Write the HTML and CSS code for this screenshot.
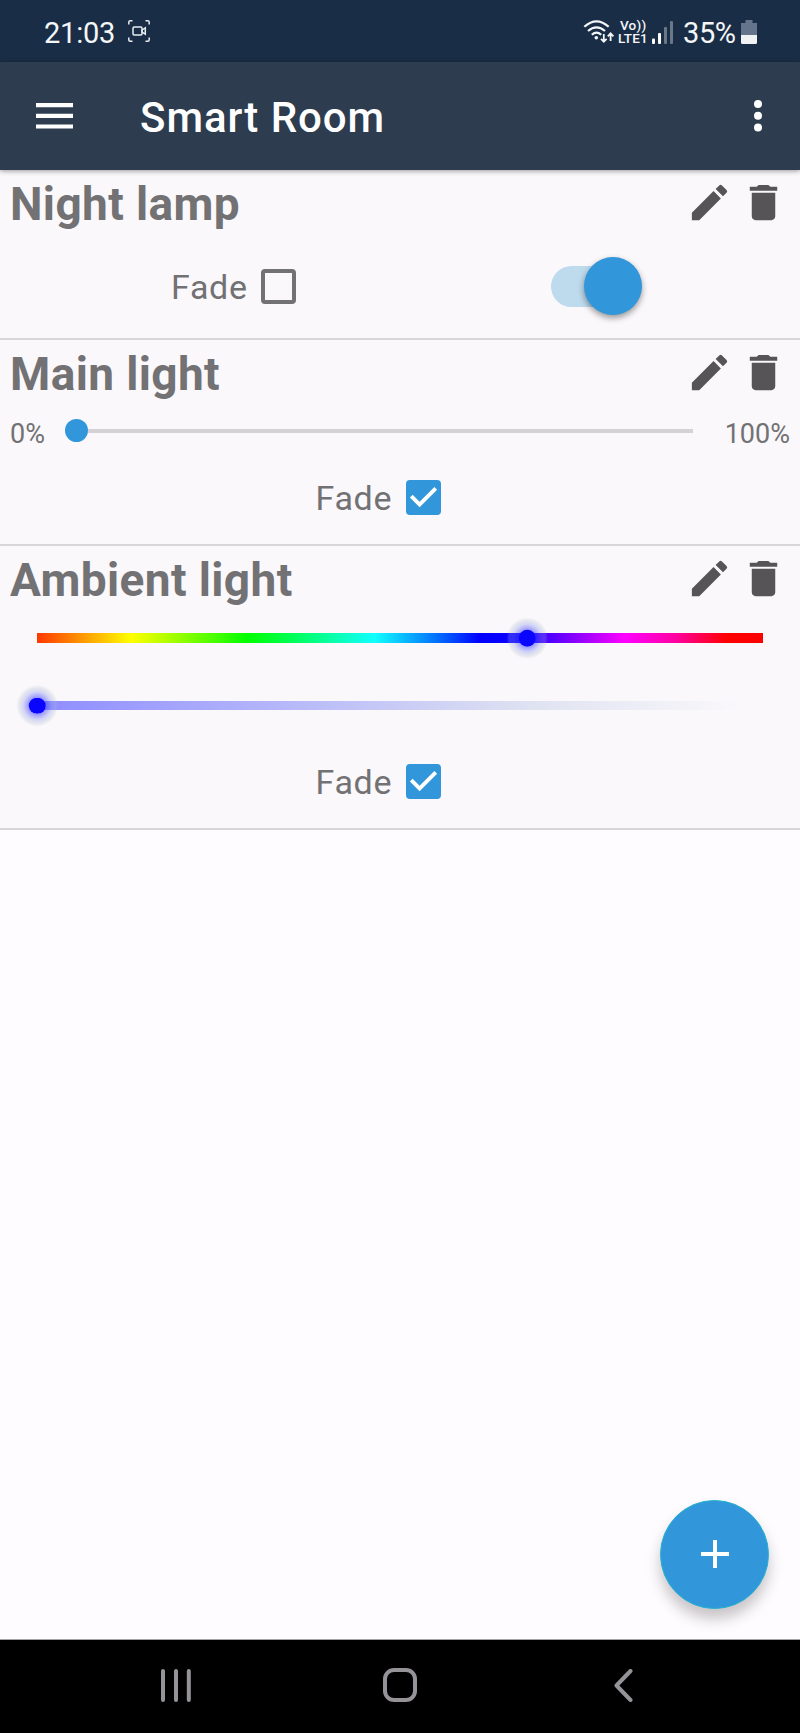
FILE: index.html
```html
<!DOCTYPE html>
<html lang="en">
<head>
<meta charset="utf-8">
<title>Smart Room</title>
<link rel="stylesheet" href="styles.css">
</head>
<body>
<svg class="defs" width="0" height="0" aria-hidden="true">
  <symbol id="pencil" viewBox="0 0 24 24"><path d="M3 17.25V21h3.75L17.81 9.94l-3.75-3.75L3 17.25zM20.71 7.04a1 1 0 0 0 0-1.41l-2.34-2.34a1 1 0 0 0-1.41 0l-1.83 1.83 3.75 3.75 1.83-1.83z"/></symbol>
  <symbol id="trash" viewBox="0 0 24 24"><path d="M6 19c0 1.100.9 2 2 2h8c1.100 0 2-.9 2-2V7H6v12zM19 4h-3.500l-1-1h-5l-1 1H5v2h14V4z"/></symbol>
  <symbol id="checked" viewBox="3 3 18 18"><rect class="check-fill" x="3" y="3" width="18" height="18" rx="2"/><path class="check-mark" d="M10 17l-5-5 1.410-1.410L10 14.170l7.590-7.590L19 8l-9 9z"/></symbol>
</svg>
<div class="screen">
  <header class="status">
    <div class="status-left">
      <span class="clock">21:03</span>
      <svg class="record" width="22" height="22" viewBox="0 0 22 22" fill="none" stroke="#e8edf2" stroke-width="1.500">
        <path d="M.8 4.500V2.300Q.8.8 2.300.8H4.500M17.500.8h2.200q1.500 0 1.500 1.500v2.200M21.200 17.500v2.200q0 1.500-1.500 1.500h-2.200M4.500 21.200H2.300q-1.500 0-1.500-1.500v-2.200"/>
        <rect x="5" y="7" width="9" height="8" rx="1.200"/><path d="M14 10l3.300-2.200v6.400L14 12z"/>
      </svg>
    </div>
    <div class="status-right">
      <svg class="wifi" width="32" height="26" viewBox="0 0 32 26" fill="none" stroke="#f4f6f8" stroke-width="2.200">
        <path d="M1.300 7.800Q13.500-3.200 25.700 7.800M5 12Q13.500 4.600 22 12M8.800 15.800Q13.500 11.600 18.200 15.800"/>
        <circle cx="13.300" cy="18.800" r="1.800" fill="#f4f6f8" stroke="none"/>
        <path stroke-width="1.800" d="M20.800 15v7.500M18 19.800l2.800 3 2.800-3M27.600 22v-7.500M24.800 17.300l2.800-3 2.800 3"/>
      </svg>
      <div class="volte"><span class="vo">Vo))</span><span>LTE1</span></div>
      <svg class="signal" width="21" height="23" viewBox="0 0 21 23" fill="#fff">
        <rect x="0" y="17.500" width="3" height="5.500" rx="1"/><rect x="6" y="12" width="3" height="11" rx="1"/>
        <g opacity=".35"><rect x="12" y="6" width="3" height="17" rx="1"/><rect x="18" y="0" width="3" height="23" rx="1"/></g>
      </svg>
      <span class="battery-text">35%</span>
      <svg class="battery" width="16" height="24" viewBox="0 0 16 24"><path d="M4.500 0h7v3H16v13H0V3h4.500z" fill="#64748a"/><path d="M0 15h16v7.500q0 1.500-1.500 1.500h-13Q0 24 0 22.500z" fill="#f1f2f4"/></svg>
    </div>
  </header>
  <nav class="appbar">
    <svg width="37" height="26" viewBox="0 0 37 26" fill="#fff"><path d="M0 0h37v4.200H0zM0 10.700h37v4.200H0zM0 21.400h37v4.200H0z"/></svg>
    <h1 class="title">Smart Room</h1>
    <svg width="8" height="32" viewBox="0 0 8 32" fill="#fff"><circle cx="4" cy="4" r="4"/><circle cx="4" cy="15.800" r="4"/><circle cx="4" cy="27.600" r="4"/></svg>
  </nav>
  <main class="content">
    <section class="device night">
      <div class="head"><h2 class="name">Night lamp</h2><svg class="action"><use href="#pencil"/></svg><svg class="action"><use href="#trash"/></svg></div>
      <div class="split">
        <label class="fade"><span>Fade</span><span class="box"></span></label>
        <div class="switch"><div class="knob"></div></div>
      </div>
    </section>
    <section class="device main-light">
      <div class="head"><h2 class="name">Main light</h2><svg class="action"><use href="#pencil"/></svg><svg class="action"><use href="#trash"/></svg></div>
      <div class="slider-row"><span class="pct">0%</span><div class="slider"><div class="thumb"></div><div class="line"></div></div><span class="pct end">100%</span></div>
      <label class="fade centered"><span>Fade</span><svg class="checkbox"><use href="#checked"/></svg></label>
    </section>
    <section class="device ambient">
      <div class="head"><h2 class="name">Ambient light</h2><svg class="action"><use href="#pencil"/></svg><svg class="action"><use href="#trash"/></svg></div>
      <div class="color-bar hue"><div class="dot" style="left:67.500%"></div></div>
      <div class="color-bar alpha"><div class="dot" style="left:0%"></div></div>
      <label class="fade centered"><span>Fade</span><svg class="checkbox"><use href="#checked"/></svg></label>
    </section>
    <button class="fab" aria-label="Add"><svg width="28" height="28" viewBox="0 0 28 28" fill="#fff"><path d="M12 0h4v12h12v4H16v12h-4V16H0v-4h12z"/></svg></button>
  </main>
  <footer class="navbar">
    <svg width="30" height="33" viewBox="0 0 30 33"><path d="M2 2v29M15 2v29M27.800 2v29"/></svg>
    <svg class="home" width="34" height="34" viewBox="0 0 34 34"><rect x="2" y="2" width="30" height="30" rx="9"/></svg>
    <svg width="19" height="33" viewBox="0 0 19 33"><path d="M16.500 2L2.500 16.500l14 14.500"/></svg>
  </footer>
</div>
</body>
</html>
```

FILE: styles.css
```css
* { box-sizing: border-box; }
body { margin: 0; font-family: Roboto, "Liberation Sans", sans-serif; color: #727173; }
svg { display: block; flex: none; }
.defs { position: absolute; }
.screen { width: 800px; height: 1733px; display: flex; flex-direction: column; overflow: hidden; background: #fefcfe; }

.status { height: 62px; background: #192e46; color: #f4f6f8; display: flex; justify-content: space-between; padding: 0 43px 0 44px; }
.status-left, .status-right { display: flex; align-items: flex-start; }
.clock, .battery-text { font-size: 29px; line-height: 34px; padding-top: 16px; letter-spacing: -.2px; }
.clock { width: 84px; }
.record { margin-top: 20px; }
.wifi { margin-top: 19px; }
.volte { display: flex; flex-direction: column; width: 37px; padding: 19px 0 0 3px; font-size: 13.500px; font-weight: 500; line-height: 13px; letter-spacing: .2px; }
.vo { padding-left: 2px; }
.signal { margin-top: 21px; }
.battery-text { width: 58px; padding-left: 0; margin-left: 10px; letter-spacing: -.4px; }
.battery { margin-top: 20px; }

.appbar { position: relative; z-index: 1; height: 108px; background: #2d3d4f; color: #fff; display: flex; align-items: center; padding: 0 38px 0 36px; box-shadow: 0 1px 5px rgba(0, 0, 0, .4); }
.title { flex: 1; margin: 3px 0 0 67px; font-size: 42px; font-weight: 500; line-height: 50px; letter-spacing: .95px; }

.content { flex: 1; position: relative; }
.device { background: #faf8fb; border-bottom: 2px solid #d7d5d8; }
.night { height: 170px; }
.main-light { height: 206px; }
.ambient { height: 284px; }
.head { height: 68px; display: flex; padding: 0 13px 0 10px; }
.name { flex: 1; margin: 0; font-size: 46px; font-weight: 700; line-height: 68px; letter-spacing: .38px; }
.action { width: 47px; height: 47px; margin: 8.500px 0 0 7.500px; fill: #565457; }
.split { height: 96px; display: flex; align-items: center; justify-content: space-between; padding: 0 158px 0 171px; }
.fade { height: 96px; display: flex; align-items: center; font-size: 34px; line-height: 40px; letter-spacing: .7px; }
.fade span:first-child { width: 90px; padding-top: 1px; }
.box { width: 35px; height: 35px; border: 4px solid #727173; border-radius: 4px; }
.switch { width: 91px; height: 41px; border-radius: 21px; background: #bedaed; display: flex; align-items: center; justify-content: flex-end; }
.knob { width: 58px; height: 58px; flex: none; border-radius: 50%; background: #3296da; box-shadow: 0 3px 6px rgba(0, 0, 0, .4); }
.slider-row { height: 45px; display: flex; align-items: center; justify-content: space-between; padding: 0 10px; font-size: 27px; }
.pct { width: 55px; padding-top: 6px; line-height: 32px; }
.end { width: 97px; text-align: right; }
.slider { flex: 1; display: flex; align-items: center; }
.thumb { width: 23px; height: 23px; border-radius: 50%; background: #3296da; }
.line { flex: 1; height: 4px; background: #d4d2d5; }
.centered { height: 89px; padding-left: 315.500px; }
.checkbox { width: 35px; height: 35px; }
.check-fill { fill: #3296da; }
.check-mark { fill: #fff; }

.color-bar { position: relative; width: 726px; margin-left: 37px; }
.hue { height: 10px; margin-top: 19px; background: linear-gradient(90deg, #ff3800, #ff0 13%, #0f0 29%, #00ff54 35%, #1ff 46.500%, #0060ff 56%, #00f 61%, #1000ff 67%, #f0f 81%, #ff00a0 88%, #f00 95%); }
.alpha { height: 9px; margin-top: 58px; background: linear-gradient(90deg, #8e8cff, #b8baf9 36%, #dfe2f1 68%, #faf8fb 97%); }
.dot { position: absolute; top: 50%; width: 16.500px; height: 16.500px; transform: translate(-50%, -50%); border-radius: 50%; background: #0a05ff; }
.dot::before { content: ""; position: absolute; inset: -13px; border-radius: 50%; background: radial-gradient(circle, transparent 8px, rgba(60, 60, 255, .5) 8.500px, rgba(130, 140, 235, .32) 14px, rgba(170, 185, 200, .25) 18px, transparent 21px); }
.ambient .centered { height: 96px; margin-top: 23px; }

.fab { position: absolute; left: 660px; top: 1329.500px; width: 109px; height: 109px; padding: 0; border: 1px solid #24b4cf; border-radius: 50%; background: #3296da; display: flex; align-items: center; justify-content: center; box-shadow: 0 10px 14px rgba(40, 30, 40, .25); }
.navbar { height: 94px; background: #000; border-top: 1px solid #a5a3a6; display: flex; align-items: flex-start; justify-content: space-between; padding: 29px 167px 0 161px; }
.navbar svg { fill: none; stroke: #969398; stroke-width: 4; stroke-linecap: round; stroke-linejoin: round; }
.navbar .home { margin: -1px 6px 0 0; }
```
